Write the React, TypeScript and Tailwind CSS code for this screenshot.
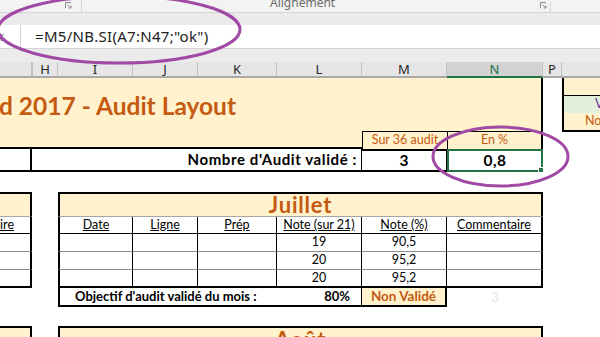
import React from "react";

const GRID = "grid grid-cols-[32px_26px_75px_65px_79px_85px_85px_96px_19px_38px]";

function Launcher() {
  return (
    <svg width="7" height="7" viewBox="0 0 7 7" className="text-[#8d8d8d]">
      <path d="M0.5 6 V0.5 H6" fill="none" stroke="currentColor" strokeWidth="1" />
      <path d="M2.5 2.5 L6 6 M6 3.5 V6 H3.5" fill="none" stroke="currentColor" strokeWidth="1" />
    </svg>
  );
}

export default function App() {
  return (
    <div className="relative w-[600px] h-[337px] overflow-hidden bg-white font-['Lato',sans-serif] text-black">
      {/* RIBBON (bottom of group labels) */}
      <div className="flex h-[13px] bg-[#f3f3f3] border-b border-[#d5d5d5] font-['Noto_Sans',sans-serif] text-[12px] text-[#6b6b6b] overflow-hidden">
        <div className="w-[82px] h-full flex justify-end items-start pr-[9px] pt-[2px] border-r border-[#d5d5d5]">
          <Launcher />
        </div>
        <div className="flex-1 flex items-start">
          <span className="ml-[188px] -mt-[3px] leading-none">Alignement</span>
        </div>
        <div className="w-[70px] h-full flex items-start pl-[10px] pt-[2px]">
          <div className="h-full flex items-start border-r border-[#d5d5d5] pr-[3px]">
            <Launcher />
          </div>
        </div>
      </div>

      {/* FORMULA BAR */}
      <div className="h-[12px] bg-[#ebebeb]" />
      <div className="flex h-[23px] bg-white font-['Noto_Sans',sans-serif]">
        <div className="w-[21px] h-full flex items-center border-r border-[#d5d5d5] text-[13px] text-[#5a5a5a] italic leading-none">
          <span className="-ml-[3px]">x</span>
        </div>
        <div className="flex-1 flex items-center pl-[14px] text-[15px] tracking-[0.3px] text-[#222] leading-none">
          =M5/NB.SI(A7:N47;"ok")
        </div>
      </div>
      <div className="h-[14px] bg-[#ebebeb] border-t border-[#d5d5d5]" />

      {/* COLUMN HEADERS */}
      <div className={`${GRID} h-[16px] font-['Noto_Sans',sans-serif] text-[13px] text-[#262626] leading-none`}>
        <div className="bg-[#e6e6e6] border-r border-b-2 border-r-[#c2c2c2] border-b-[#a9a9a9]" />
        <div className="flex items-center justify-center bg-[#e6e6e6] border-l border-r border-b-2 border-x-[#c2c2c2] border-b-[#a9a9a9]">H</div>
        <div className="flex items-center justify-center bg-[#e6e6e6] border-r border-b-2 border-r-[#c2c2c2] border-b-[#a9a9a9]">I</div>
        <div className="flex items-center justify-center bg-[#e6e6e6] border-r border-b-2 border-r-[#c2c2c2] border-b-[#a9a9a9]">J</div>
        <div className="flex items-center justify-center bg-[#e6e6e6] border-r border-b-2 border-r-[#c2c2c2] border-b-[#a9a9a9]">K</div>
        <div className="flex items-center justify-center bg-[#e6e6e6] border-r border-b-2 border-r-[#c2c2c2] border-b-[#a9a9a9]">L</div>
        <div className="flex items-center justify-center bg-[#e6e6e6] border-r border-b-2 border-r-[#c2c2c2] border-b-[#a9a9a9]">M</div>
        <div className="flex items-center justify-center bg-[#d2d2d2] text-[#217346] border-r border-b-2 border-r-[#c2c2c2] border-b-[#217346]">N</div>
        <div className="flex items-center justify-center bg-[#e6e6e6] border-r border-b-2 border-r-[#c2c2c2] border-b-[#a9a9a9]">P</div>
        <div className="bg-[#e6e6e6] border-b-2 border-b-[#a9a9a9]" />
      </div>

      {/* TITLE + SUMMARY */}
      <div className={`${GRID} grid-rows-[53px_18px_23px]`}>
        <div className="col-start-1 col-span-6 row-start-1 row-span-2 bg-[#fff2cc] border-b-2 border-black overflow-hidden">
          <div className="pt-[16px] -ml-[1px] text-[24.5px] leading-none font-bold text-[#c55a11] whitespace-nowrap">
            d 2017 - Audit Layout
          </div>
        </div>
        <div className="col-start-7 row-start-1 bg-[#fff2cc]" />
        <div className="col-start-8 row-start-1 bg-[#fff2cc] border-r-2 border-black" />

        <div className="col-start-7 row-start-2 flex items-center justify-center bg-[#fff2cc] border-t border-l border-black text-[12.5px] text-[#c55a11] leading-none">
          Sur 36 audit
        </div>
        <div className="col-start-8 row-start-2 flex items-center justify-center bg-[#fff2cc] border-t border-l border-r-2 border-black text-[12.5px] text-[#c55a11] leading-none">
          En %
        </div>

        {/* right box */}
        <div className="col-start-10 row-start-1 row-span-3 self-start flex flex-col border-l-2 border-b-2 border-black text-[12.5px] leading-none whitespace-nowrap overflow-hidden">
          <div className="h-[18px] bg-[#fff2cc] border-b border-black" />
          <div className="h-[17px] flex items-center bg-[#e2efda] pl-[31px] text-[#7030a0]">Validé</div>
          <div className="h-[17px] flex items-center bg-[#fff2cc] pl-[21px] text-[#c55a11]">Non Validé</div>
        </div>

        <div className="col-start-1 row-start-3 border-r-2 border-b-2 border-black" />
        <div className="col-start-2 col-span-5 row-start-3 flex items-center justify-end pr-[4px] border-r border-b-2 border-black text-[15px] tracking-[0.6px] font-bold leading-none">
          Nombre d'Audit validé :
        </div>
        <div className="col-start-7 row-start-3 flex items-center justify-center border-t-2 border-r border-b-2 border-black text-[15.5px] font-bold leading-none">
          3
        </div>
        <div className="relative col-start-8 row-start-3 flex items-center justify-center border-2 border-[#217346] text-[15.5px] tracking-[0.5px] font-bold leading-none">
          0,8
          <div className="absolute -right-[3px] -bottom-[3px] w-[6px] h-[6px] bg-[#217346] border border-white" />
        </div>
      </div>

      <div className="h-[20px]" />

      {/* TABLES */}
      <div className={`${GRID} grid-rows-[25px_17px_18px_18px_18px_19px] text-[12.5px] leading-none`}>
        {/* left table (column G) */}
        <div className="col-start-1 row-start-1 bg-[#fff2cc] border-t-2 border-r-2 border-black border-b border-b-[#a6a6a6]" />
        <div className="col-start-1 row-start-2 flex items-center justify-end pr-[16px] overflow-hidden whitespace-nowrap border-r-2 border-b border-black underline">
          Commentaire
        </div>
        <div className="col-start-1 row-start-3 border-r-2 border-r-black border-b border-b-[#8c8c8c]" />
        <div className="col-start-1 row-start-4 border-r-2 border-r-black border-b border-b-[#8c8c8c]" />
        <div className="col-start-1 row-start-5 border-r-2 border-b-2 border-black" />

        {/* Juillet */}
        <div className="col-start-3 col-span-6 row-start-1 flex items-center justify-center bg-[#fff2cc] border-t-2 border-x-2 border-black border-b border-b-[#a6a6a6] text-[22px] tracking-[0.8px] font-bold text-[#c55a11]">
          Juillet
        </div>

        <div className="col-start-3 row-start-2 flex items-center justify-center border-l-2 border-r border-b border-black underline">Date</div>
        <div className="col-start-4 row-start-2 flex items-center justify-center border-r border-b border-black underline">Ligne</div>
        <div className="col-start-5 row-start-2 flex items-center justify-center border-r border-b border-black underline">Prép</div>
        <div className="col-start-6 row-start-2 flex items-center justify-center border-r border-b border-black underline whitespace-nowrap">Note (sur 21)</div>
        <div className="col-start-7 row-start-2 flex items-center justify-center border-r border-b border-black underline">Note (%)</div>
        <div className="col-start-8 row-start-2 flex items-center justify-center border-r-2 border-b border-black underline">Commentaire</div>

        {[
          { r: "row-start-3", b: "border-b border-b-[#8c8c8c]", n: "19", p: "90,5" },
          { r: "row-start-4", b: "border-b border-b-[#8c8c8c]", n: "20", p: "95,2" },
          { r: "row-start-5", b: "border-b-2 border-b-black", n: "20", p: "95,2" },
        ].map((row) => (
          <React.Fragment key={row.r}>
            <div className={`col-start-3 ${row.r} border-l-2 border-r border-x-black ${row.b}`} />
            <div className={`col-start-4 ${row.r} border-r border-r-black ${row.b}`} />
            <div className={`col-start-5 ${row.r} border-r border-r-black ${row.b}`} />
            <div className={`col-start-6 ${row.r} flex items-center justify-center border-r border-r-black ${row.b}`}>{row.n}</div>
            <div className={`col-start-7 ${row.r} flex items-center justify-center border-r border-r-black ${row.b}`}>{row.p}</div>
            <div className={`col-start-8 ${row.r} border-r-2 border-r-black ${row.b}`} />
          </React.Fragment>
        ))}

        <div className="col-start-3 col-span-4 row-start-6 flex items-center justify-between pl-[15px] pr-[11px] border-l-2 border-r border-b-2 border-black font-bold text-[13px] whitespace-nowrap">
          <span>Objectif d'audit validé du mois :</span>
          <span>80%</span>
        </div>
        <div className="col-start-7 row-start-6 flex items-center justify-center bg-[#fff2cc] border-r-2 border-b-2 border-black font-bold text-[13.5px] text-[#c55a11] whitespace-nowrap">
          Non Validé
        </div>
        <div className="col-start-8 row-start-6 flex items-center justify-center text-[13px] text-[#e6e6e6]">3</div>
      </div>

      <div className="h-[19px]" />

      {/* AOUT */}
      <div className={`${GRID} grid-rows-[25px]`}>
        <div className="col-start-1 bg-[#fff2cc] border-t-2 border-r-2 border-black" />
        <div className="col-start-3 col-span-6 flex items-center justify-center bg-[#fff2cc] border-t-2 border-x-2 border-black text-[22px] tracking-[0.8px] leading-none font-bold text-[#c55a11]">
          Août
        </div>
      </div>

      {/* ANNOTATIONS */}
      <svg className="absolute inset-0 pointer-events-none" width="600" height="337" viewBox="0 0 600 337">
        <ellipse cx="119" cy="29.5" rx="121" ry="33.5" fill="none" stroke="#a14aa5" strokeWidth="3" />
        <ellipse cx="500.5" cy="156.5" rx="67.5" ry="29.5" fill="none" stroke="#a14aa5" strokeWidth="3" />
      </svg>
    </div>
  );
}
